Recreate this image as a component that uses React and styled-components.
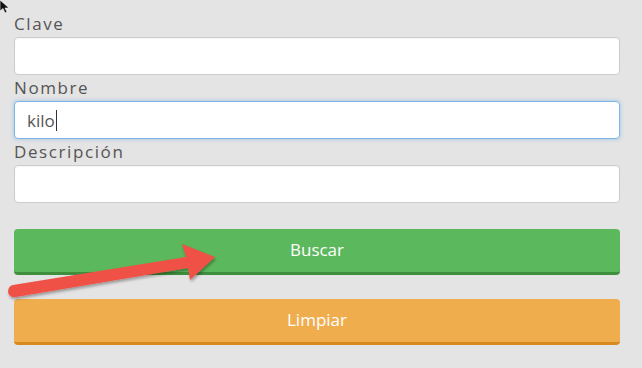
import React from 'react';
import styled, { createGlobalStyle } from 'styled-components';

const GlobalStyle = createGlobalStyle`
    html, body {
        margin: 0;
        padding: 0;
        background: #e4e4e4;
    }
    body {
        font-family: "Open Sans", "Liberation Sans", sans-serif;
    }
`;

const Page = styled.div`
    position: relative;
    width: 642px;
    height: 368px;
    box-sizing: border-box;
    padding: 11px 22px 0 14px;
    background: #e4e4e4;
    overflow: hidden;
`;

const Form = styled.form`
    display: flex;
    flex-direction: column;
`;

const Label = styled.label`
    display: block;
    height: 26px;
    line-height: 26px;
    font-size: 17px;
    font-weight: 400;
    letter-spacing: 1.6px;
    color: #555;
`;

const Field = styled.div`
    position: relative;
`;

const Input = styled.input`
    display: block;
    box-sizing: border-box;
    width: 100%;
    height: 38px;
    margin: 0;
    padding: 0 12px;
    font-family: "Open Sans", "Liberation Sans", sans-serif;
    font-size: 17px;
    color: #555;
    background: #fff;
    border: 1px solid ${(p) => (p.$focused ? '#7fb5e6' : '#cccccc')};
    border-radius: 4px;
    box-shadow: ${(p) => (p.$focused ? '0 0 4px rgba(102, 175, 233, 0.6)' : 'inset 0 1px 1px rgba(0,0,0,0.04)')};
    outline: none;
`;

const Caret = styled.span`
    position: absolute;
    left: ${(p) => p.$x}px;
    top: 9px;
    width: 1px;
    height: 21px;
    background: #333;
`;

const Actions = styled.div`
    display: flex;
    flex-direction: column;
    gap: 24px;
    margin-top: 26px;
`;

const Button = styled.button`
    box-sizing: border-box;
    width: 100%;
    height: 46px;
    border: none;
    border-bottom: 3px solid ${(p) => p.$shade};
    border-radius: 4px;
    background: ${(p) => p.$bg};
    color: #fff;
    font-family: "Open Sans", "Liberation Sans", sans-serif;
    font-size: 17px;
    padding: 0 0 2px;
`;

const Overlay = styled.svg`
    position: absolute;
    left: 0;
    top: 0;
    pointer-events: none;
`;

const App = () => {
    return (
        <Page>
            <GlobalStyle />
            <Form onSubmit={(e) => e.preventDefault()}>
                <Label>Clave</Label>
                <Input type="text" defaultValue="" />
                <Label>Nombre</Label>
                <Field>
                    <Input type="text" defaultValue="kilo" $focused />
                    <Caret $x={42} />
                </Field>
                <Label>Descripción</Label>
                <Input type="text" defaultValue="" />
                <Actions>
                    <Button type="submit" $bg="#5cb85c" $shade="#3e8f3e">Buscar</Button>
                    <Button type="button" $bg="#f0ad4e" $shade="#d98a1f">Limpiar</Button>
                </Actions>
            </Form>

            {/* annotation arrow + mouse pointer */}
            <Overlay width="642" height="368" viewBox="0 0 642 368">
                <defs>
                    <filter id="sh" x="-10%" y="-30%" width="120%" height="160%">
                        <feDropShadow dx="1" dy="2" stdDeviation="1.5" floodColor="#000" floodOpacity="0.35" />
                    </filter>
                </defs>
                <g filter="url(#sh)" fill="#f05146">
                    <path d="M13 285 L186 257 L182 244 L215 257 L190 280 L188 268 L16 297 Q9 298 8 292 Q8 286 13 285 Z" />
                </g>
                <path d="M0 0 L0 11 L3 8.5 L5 13 L7 12 L5 8 L9 8 Z" fill="#111" stroke="#fff" strokeWidth="0.6" />
            </Overlay>
        </Page>
    );
};

export default App;
